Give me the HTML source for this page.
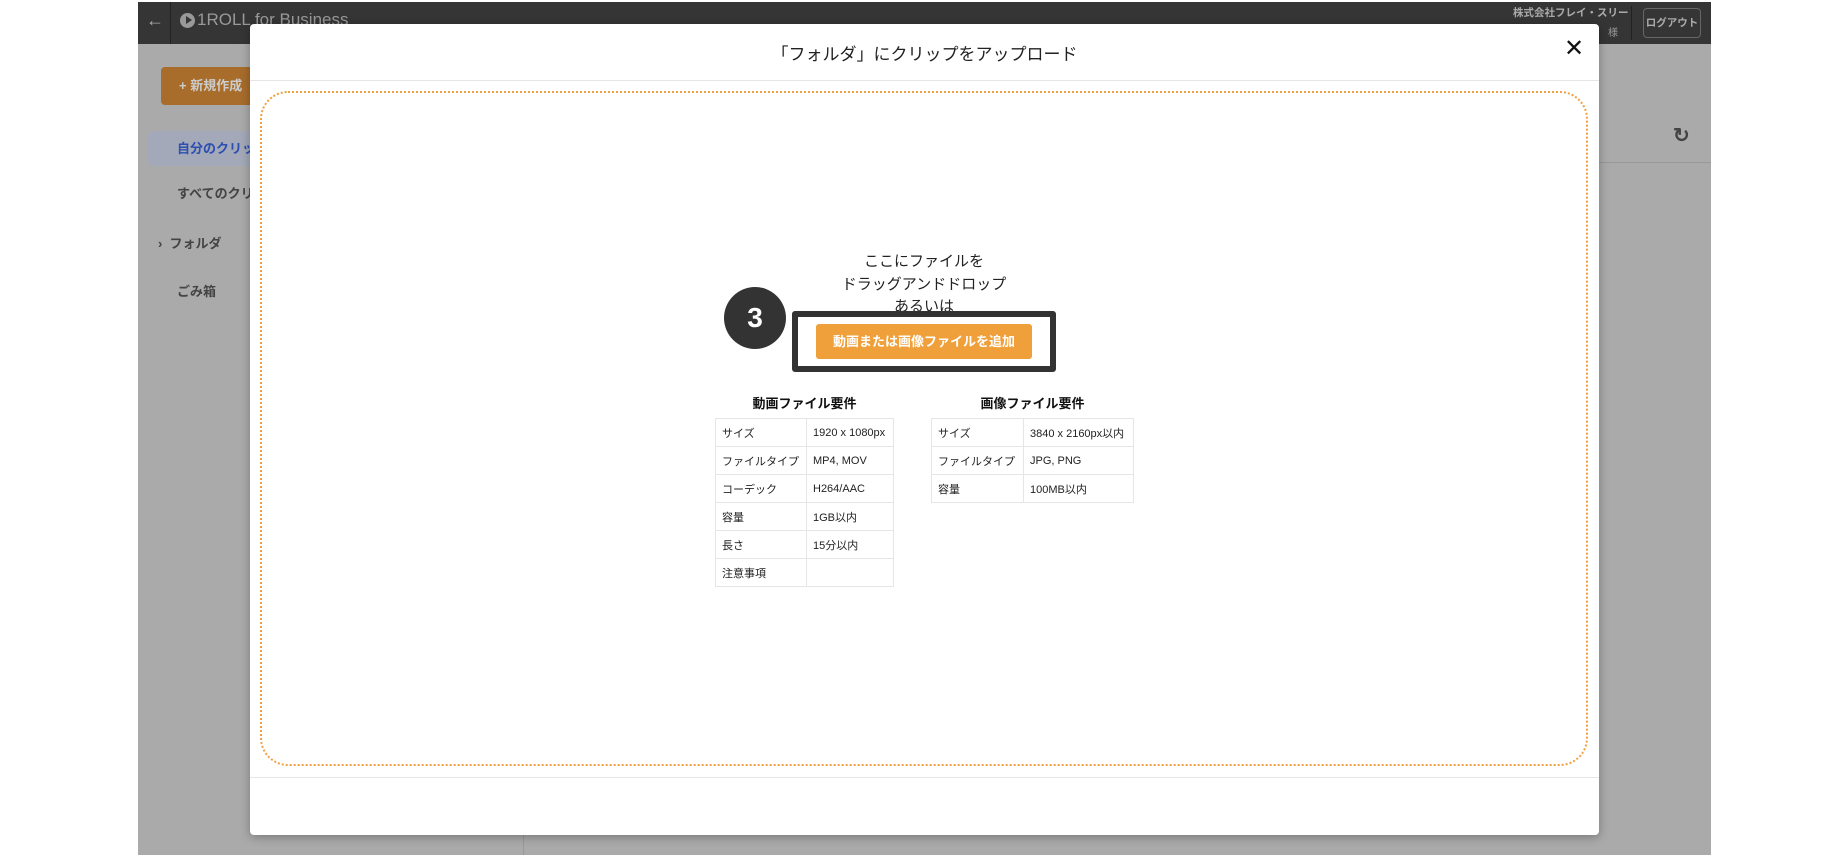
<!DOCTYPE html>
<html><head><meta charset="utf-8"><style>
*{box-sizing:border-box;margin:0;padding:0}
body{width:1846px;height:858px;background:#fff;position:relative;overflow:hidden;font-family:"Liberation Sans","Noto Sans CJK JP",sans-serif}
.abs{position:absolute;white-space:nowrap}
.app{left:138px;top:2px;width:1573px;height:853px;background:#aaa}
.top{left:138px;top:2px;width:1573px;height:42px;background:#353535}
table{border-collapse:collapse;font-size:11px;color:#222;table-layout:fixed}
td{border:1px solid #e6e6e6;height:28px;padding:0 6px;white-space:nowrap;overflow:hidden}
</style></head><body>
<div class="abs app"></div>
<div class="abs top"></div>
<div class="abs" style="left:170px;top:2px;width:1px;height:42px;background:#222"></div>
<div class="abs" style="left:146px;top:10px;color:#aaa;font-size:18px">←</div>
<div class="abs" style="left:180px;top:13px;width:15px;height:15px;border-radius:50%;background:#999"></div>
<div class="abs" style="left:186px;top:16px;width:0;height:0;border-left:6px solid #353535;border-top:4.5px solid transparent;border-bottom:4.5px solid transparent"></div>
<div class="abs" style="left:197px;top:10px;color:#999;font-size:17px">1ROLL for Business</div>
<div class="abs" style="left:1513px;top:5px;color:#aaa;font-size:10.5px;font-weight:bold">株式会社フレイ・スリー</div>
<div class="abs" style="left:1608px;top:24px;color:#999;font-size:10px">様</div>
<div class="abs" style="left:1631px;top:6px;width:1px;height:34px;background:#222"></div>
<div class="abs" style="left:1643px;top:8px;width:58px;height:30px;border:1px solid #666;border-radius:4px;color:#aaa;font-size:10.5px;font-weight:bold;text-align:center;line-height:28px">ログアウト</div>
<div class="abs" style="left:161px;top:67px;width:92px;height:38px;background:#a86c2b;border-radius:4px;color:#ccc;font-size:13px;font-weight:bold;line-height:38px;padding-left:18px">+ 新規作成</div>
<div class="abs" style="left:147px;top:131px;width:110px;height:35px;background:#a3a9b8;border-radius:8px;color:#2d4fb0;font-size:13px;font-weight:bold;line-height:35px;padding-left:30px">自分のクリップ</div>
<div class="abs" style="left:177px;top:183px;color:#444;font-size:13px;font-weight:bold">すべてのクリップ</div>
<div class="abs" style="left:158px;top:233px;color:#444;font-size:13px;font-weight:bold">›&nbsp; フォルダ</div>
<div class="abs" style="left:177px;top:281px;color:#444;font-size:13px;font-weight:bold">ごみ箱</div>
<div class="abs" style="left:523px;top:777px;width:1px;height:78px;background:#999"></div>
<div class="abs" style="left:1599px;top:162px;width:112px;height:1px;background:#999"></div>
<div class="abs" style="left:1673px;top:123px;color:#444;font-size:20px;font-weight:bold">↻</div>
<div class="abs" style="left:250px;top:24px;width:1349px;height:811px;background:#fff;border-radius:4px;box-shadow:0 2px 10px rgba(0,0,0,.3)"></div>
<div class="abs" style="left:250px;top:40px;width:1349px;text-align:center;font-size:17px;color:#222">「フォルダ」にクリップをアップロード</div>
<div class="abs" style="left:1564px;top:34px;font-size:24px;color:#111">✕</div>
<div class="abs" style="left:250px;top:80px;width:1349px;height:1px;background:#e6e6e6"></div>
<div class="abs" style="left:250px;top:777px;width:1349px;height:1px;background:#e6e6e6"></div>
<div class="abs" style="left:260px;top:91px;width:1328px;height:675px;border:2px dotted #f0a040;border-radius:28px"></div>
<div class="abs" style="left:724px;top:251px;width:400px;text-align:center;font-size:15px;line-height:22.5px;color:#222">ここにファイルを<br>ドラッグアンドドロップ<br>あるいは</div>
<div class="abs" style="left:792px;top:311px;width:264px;height:61px;border:6px solid #333;border-radius:3px;background:#fff"></div>
<div class="abs" style="left:816px;top:324px;width:216px;height:35px;background:#f0a03a;border-radius:3px;color:#fff;font-size:13px;font-weight:bold;text-align:center;line-height:35px">動画または画像ファイルを追加</div>
<div class="abs" style="left:724px;top:287px;width:62px;height:62px;border-radius:50%;background:#333;color:#fff;font-size:28px;font-weight:bold;text-align:center;line-height:62px">3</div>
<div class="abs" style="left:715px;top:393px;width:179px;text-align:center;font-size:13px;font-weight:bold;color:#111">動画ファイル要件</div>
<div class="abs" style="left:931px;top:393px;width:203px;text-align:center;font-size:13px;font-weight:bold;color:#111">画像ファイル要件</div>
<table class="abs" style="left:715px;top:418px;width:179px">
<tr><td style="width:91px">サイズ</td><td>1920 x 1080px</td></tr>
<tr><td>ファイルタイプ</td><td>MP4, MOV</td></tr>
<tr><td>コーデック</td><td>H264/AAC</td></tr>
<tr><td>容量</td><td>1GB以内</td></tr>
<tr><td>長さ</td><td>15分以内</td></tr>
<tr><td>注意事項</td><td></td></tr>
</table>
<table class="abs" style="left:931px;top:418px;width:203px">
<tr><td style="width:92px">サイズ</td><td>3840 x 2160px以内</td></tr>
<tr><td>ファイルタイプ</td><td>JPG, PNG</td></tr>
<tr><td>容量</td><td>100MB以内</td></tr>
</table>
</body></html>
